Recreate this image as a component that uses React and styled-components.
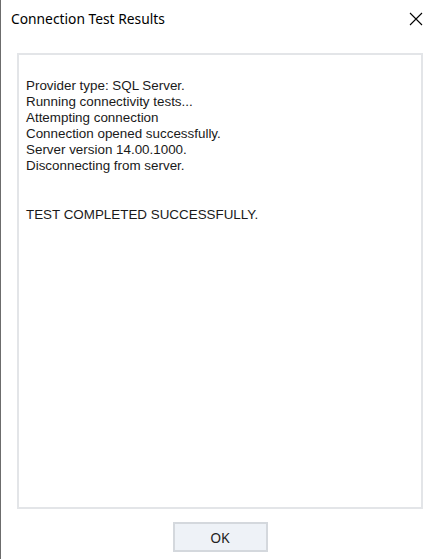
import styled, { createGlobalStyle } from 'styled-components';

const GlobalStyle = createGlobalStyle`
    html, body {
        margin:0;
        padding:0;
        background:#ffffff;
    }
`

const lines = [
    'Provider type: SQL Server.',
    'Running connectivity tests...',
    'Attempting connection',
    'Connection opened successfully.',
    'Server version 14.00.1000.',
    'Disconnecting from server.',
    '',
    '',
    'TEST COMPLETED SUCCESSFULLY.',
]

export default function App () {
    return(
        <>
            <GlobalStyle/>
            <Window>
                <TitleBar>
                    <Title>Connection Test Results</Title>
                    <CloseButton aria-label="Close">
                        <svg width="14" height="14" viewBox="0 0 14 14">
                            <path d="M1 1 L13 13 M13 1 L1 13" stroke="#000" strokeWidth="1.1" fill="none"/>
                        </svg>
                    </CloseButton>
                </TitleBar>
                <Content>
                    <ResultsBox>
                        {lines.map((line, i) => (
                            <Line key={i}>{line || '\u00a0'}</Line>
                        ))}
                    </ResultsBox>
                    <OkButton>OK</OkButton>
                </Content>
            </Window>
        </>
    )
}

const Window = styled.div`
    height:559px;
    box-sizing:border-box;
    border-left:1px solid #6c6c6c;
    display:flex;
    flex-direction:column;
    background:#ffffff;
`

const TitleBar = styled.div`
    height:36px;
    display:flex;
    flex-direction:row;
    align-items:center;
    justify-content:space-between;
    padding:0 13px 0 10px;
`

const Title = styled.div`
    font-family:"Noto Sans", "Open Sans", sans-serif;
    font-size:13.8px;
    color:#000000;
`

const CloseButton = styled.div`
    width:14px;
    height:14px;
    display:flex;
    margin-top:1px;
`

const Content = styled.div`
    flex:1;
    display:flex;
    flex-direction:column;
    align-items:center;
    gap:13px;
    padding:17px 13px 7px 16px;
`

const ResultsBox = styled.div`
    align-self:stretch;
    height:456px;
    box-sizing:border-box;
    border:2px solid #e3e5e8;
    padding:23px 7px;
    font-family:"Liberation Sans", Arial, sans-serif;
    font-size:13.4px;
    line-height:16.1px;
    color:#1a1a1a;
`

const Line = styled.div`
    white-space:pre;
`

const OkButton = styled.div`
    width:95px;
    height:30px;
    box-sizing:border-box;
    border:2px solid #d4d8dd;
    background:#eef2f7;
    display:flex;
    align-items:center;
    justify-content:center;
    font-family:"Noto Sans", "Open Sans", sans-serif;
    font-size:14px;
    color:#222222;
`
